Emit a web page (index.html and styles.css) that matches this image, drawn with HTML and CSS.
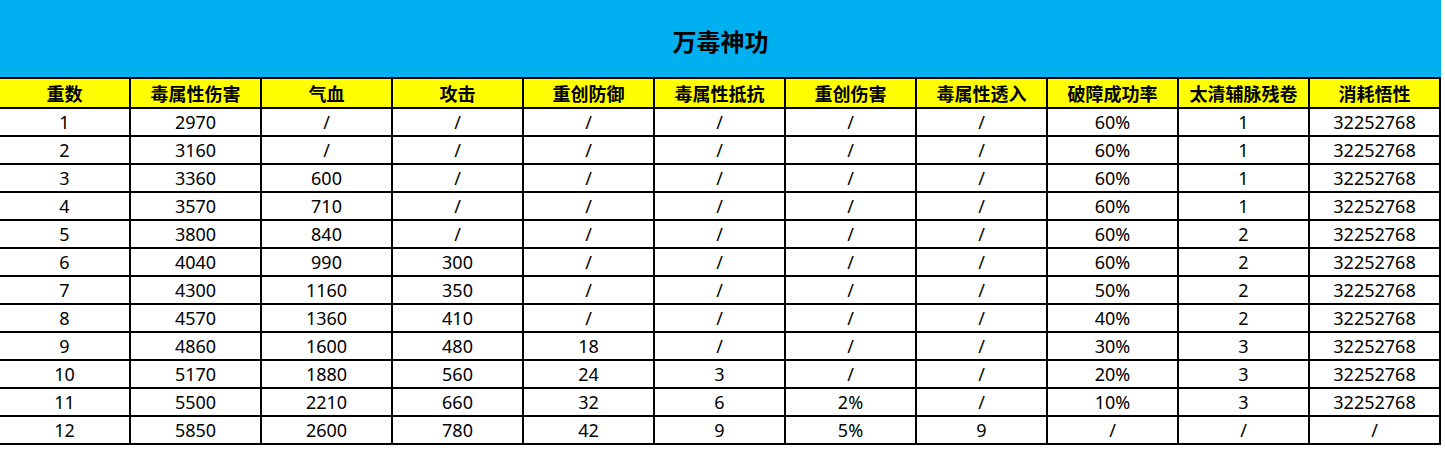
FILE: index.html
```html
<!DOCTYPE html>
<html lang="zh">
<head>
<meta charset="utf-8">
<link rel="stylesheet" href="styles.css">
</head>
<body>
<div class="sheet">
  <div class="title">万毒神功</div>
  <table class="grid">
    <thead>
      <tr>
        <th>重数</th><th>毒属性伤害</th><th>气血</th><th>攻击</th><th>重创防御</th><th>毒属性抵抗</th><th>重创伤害</th><th>毒属性透入</th><th>破障成功率</th><th>太清辅脉残卷</th><th>消耗悟性</th>
      </tr>
    </thead>
    <tbody>
      <tr><td>1</td><td>2970</td><td>/</td><td>/</td><td>/</td><td>/</td><td>/</td><td>/</td><td>60%</td><td>1</td><td>32252768</td></tr>
      <tr><td>2</td><td>3160</td><td>/</td><td>/</td><td>/</td><td>/</td><td>/</td><td>/</td><td>60%</td><td>1</td><td>32252768</td></tr>
      <tr><td>3</td><td>3360</td><td>600</td><td>/</td><td>/</td><td>/</td><td>/</td><td>/</td><td>60%</td><td>1</td><td>32252768</td></tr>
      <tr><td>4</td><td>3570</td><td>710</td><td>/</td><td>/</td><td>/</td><td>/</td><td>/</td><td>60%</td><td>1</td><td>32252768</td></tr>
      <tr><td>5</td><td>3800</td><td>840</td><td>/</td><td>/</td><td>/</td><td>/</td><td>/</td><td>60%</td><td>2</td><td>32252768</td></tr>
      <tr><td>6</td><td>4040</td><td>990</td><td>300</td><td>/</td><td>/</td><td>/</td><td>/</td><td>60%</td><td>2</td><td>32252768</td></tr>
      <tr><td>7</td><td>4300</td><td>1160</td><td>350</td><td>/</td><td>/</td><td>/</td><td>/</td><td>50%</td><td>2</td><td>32252768</td></tr>
      <tr><td>8</td><td>4570</td><td>1360</td><td>410</td><td>/</td><td>/</td><td>/</td><td>/</td><td>40%</td><td>2</td><td>32252768</td></tr>
      <tr><td>9</td><td>4860</td><td>1600</td><td>480</td><td>18</td><td>/</td><td>/</td><td>/</td><td>30%</td><td>3</td><td>32252768</td></tr>
      <tr><td>10</td><td>5170</td><td>1880</td><td>560</td><td>24</td><td>3</td><td>/</td><td>/</td><td>20%</td><td>3</td><td>32252768</td></tr>
      <tr><td>11</td><td>5500</td><td>2210</td><td>660</td><td>32</td><td>6</td><td>2%</td><td>/</td><td>10%</td><td>3</td><td>32252768</td></tr>
      <tr><td>12</td><td>5850</td><td>2600</td><td>780</td><td>42</td><td>9</td><td>5%</td><td>9</td><td>/</td><td>/</td><td>/</td></tr>
    </tbody>
  </table>
</div>
</body>
</html>
```
FILE: styles.css
```css
html, body {
  margin: 0;
  padding: 0;
  background: #ffffff;
}
body {
  font-family: "Noto Sans", "Noto Sans CJK SC", sans-serif;
  color: #000;
  overflow: hidden;
}
.sheet {
  width: 1441px;
}
.title {
  height: 77px;
  background: #00b0f0;
  display: flex;
  align-items: center;
  justify-content: center;
  font-family: "Noto Sans CJK SC", sans-serif;
  font-weight: 700;
  font-size: 24px;
  padding-top: 4px;
  box-sizing: border-box;
}
.grid {
  border-collapse: separate;
  border-spacing: 0;
  table-layout: fixed;
  margin-left: -2px;
  border-top: 2px solid #000;
  border-left: 2px solid #000;
}
.grid th,
.grid td {
  width: 129px;
  padding: 0;
  border-right: 2px solid #000;
  border-bottom: 2px solid #000;
  text-align: center;
  vertical-align: middle;
  white-space: nowrap;
  overflow: hidden;
}
.grid th {
  height: 28px;
  background: #ffff00;
  font-family: "Noto Sans CJK SC", sans-serif;
  font-weight: 700;
  font-size: 18px;
  line-height: 28px;
}
.grid td {
  height: 26px;
  font-size: 18px;
  line-height: 26px;
}
```
